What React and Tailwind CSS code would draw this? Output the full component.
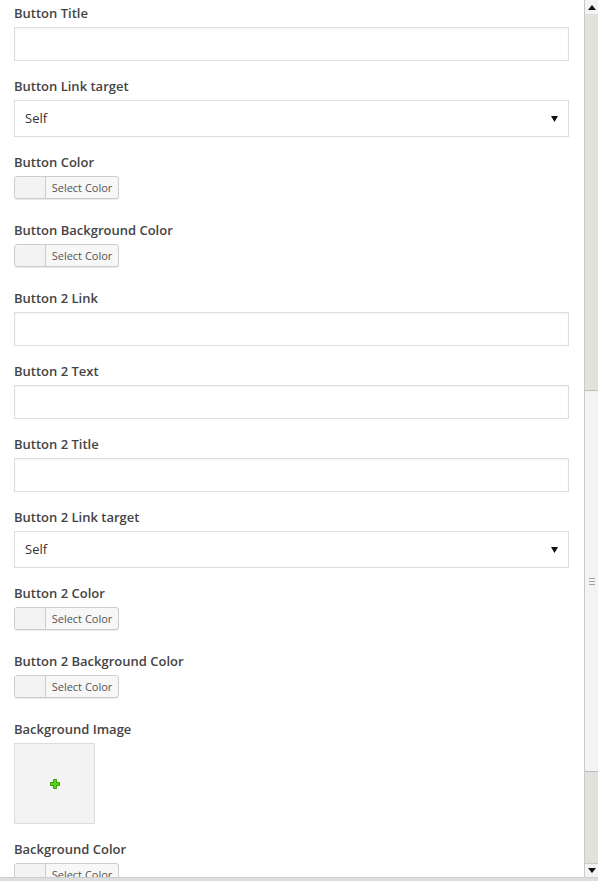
import React from 'react';

const fields = [
  { label: 'Button Title', type: 'text' },
  { label: 'Button Link target', type: 'select' },
  { label: 'Button Color', type: 'color' },
  { label: 'Button Background Color', type: 'color' },
  { label: 'Button 2 Link', type: 'text' },
  { label: 'Button 2 Text', type: 'text' },
  { label: 'Button 2 Title', type: 'text' },
  { label: 'Button 2 Link target', type: 'select' },
  { label: 'Button 2 Color', type: 'color' },
  { label: 'Button 2 Background Color', type: 'color' },
  { label: 'Background Image', type: 'image' },
  { label: 'Background Color', type: 'color' },
];

const TextInput = () => (
  <div className="h-[34px] w-[555px] border border-[#dddddd] bg-white shadow-[inset_0_1px_2px_rgba(0,0,0,0.05)]" />
);

const SelectInput = () => (
  <div className="h-[37px] w-[555px] border border-[#dddddd] bg-white flex items-center justify-between pl-[10px] pr-[10px] pt-px">
    <span className="text-[13px] text-[#333]">Self</span>
    <svg width="7" height="6" viewBox="0 0 7 6">
      <path d="M0 0 L7 0 L3.5 6 Z" fill="#111" />
    </svg>
  </div>
);

const ColorButton = () => (
  <div className="flex h-[23px] w-[105px] rounded-[3px] border border-[#cccccc] bg-[#f7f7f7] shadow-[0_1px_0_rgba(0,0,0,0.08)] overflow-hidden">
    <div className="w-[31px] border-r border-[#cccccc] bg-[#f3f3f3]" />
    <div className="flex-1 flex items-center justify-center text-[11px] text-[#555] leading-none">Select Color</div>
  </div>
);

const ImageBox = () => (
  <div className="h-[81px] w-[81px] border border-[#dddddd] bg-[#f3f3f3] flex items-center justify-center">
    <svg width="10" height="10" viewBox="0 0 10 10">
      <path d="M3.5 0.5 H6.5 V3.5 H9.5 V6.5 H6.5 V9.5 H3.5 V6.5 H0.5 V3.5 H3.5 Z" fill="#5cd215" stroke="#3a9a0a" strokeWidth="1" />
    </svg>
  </div>
);

const Field = ({ label, type }) => {
  const bottom = type === 'color' ? 'mb-[22px]' : 'mb-[16px]';
  return (
    <div className={bottom}>
      <div className="text-[13px] leading-[18px] font-semibold text-[#444] mb-[5px]">{label}</div>
      {type === 'text' && <TextInput />}
      {type === 'select' && <SelectInput />}
      {type === 'color' && <ColorButton />}
      {type === 'image' && <ImageBox />}
    </div>
  );
};

const Scrollbar = () => (
  <div className="w-[14px] h-full flex flex-col border-l border-[#c9c9c9] bg-[#e4e0db]">
    <div className="h-[14px] flex items-center justify-center bg-[#f3f3f3]">
      <svg width="8" height="5" viewBox="0 0 8 5">
        <path d="M0 5 L8 5 L4 0 Z" fill="#111" />
      </svg>
    </div>
    <div className="h-[376px]" />
    <div className="h-[382px] bg-[#f4f3f1] border-y border-[#bdbdbd] flex items-center justify-center">
      <div className="flex flex-col gap-[2px]">
        <div className="w-[6px] h-px bg-[#a0a0a0]" />
        <div className="w-[6px] h-px bg-[#a0a0a0]" />
        <div className="w-[6px] h-px bg-[#a0a0a0]" />
      </div>
    </div>
    <div className="flex-1" />
    <div className="h-[14px] flex items-center justify-center bg-[#f3f3f3] border-t border-[#c9c9c9]">
      <svg width="8" height="5" viewBox="0 0 8 5">
        <path d="M0 0 L8 0 L4 5 Z" fill="#111" />
      </svg>
    </div>
  </div>
);

export default function App() {
  return (
    <div className="w-[598px] h-[881px] flex flex-col overflow-hidden bg-white" style={{ fontFamily: '"Open Sans", "Noto Sans", Arial, sans-serif' }}>
      <div className="flex flex-1 min-h-0">
        <div className="flex-1 overflow-hidden pl-[14px] pt-[4px]">
          {fields.map((f) => (
            <Field key={f.label} {...f} />
          ))}
        </div>
        <Scrollbar />
      </div>
      <div className="h-[4px] bg-[#dedede] border-t border-[#cfcfcf]" />
    </div>
  );
}
